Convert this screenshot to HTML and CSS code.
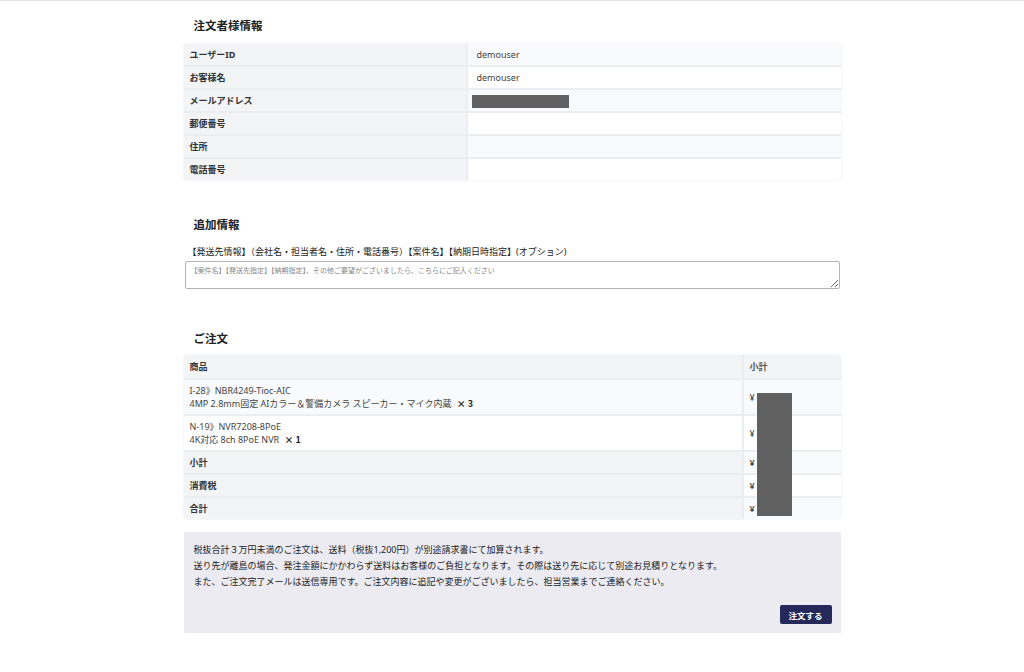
FILE: index.html
```html
<!DOCTYPE html>
<html lang="ja">
<head>
    <meta charset="UTF-8">
    <meta name="viewport" content="width=device-width, initial-scale=1.0">
    <title>ご注文確認</title>
    <link rel="stylesheet" href="styles.css">
</head>
<body>
    <div class="page">
        <h2 class="section-title">注文者様情報</h2>
        <div class="card">
            <table class="info-table">
                <tr><th>ユーザーID</th><td>demouser</td></tr>
                <tr><th>お客様名</th><td>demouser</td></tr>
                <tr><th>メールアドレス</th><td><span class="redact-inline"></span></td></tr>
                <tr><th>郵便番号</th><td></td></tr>
                <tr><th>住所</th><td></td></tr>
                <tr><th>電話番号</th><td></td></tr>
            </table>
        </div>

        <h2 class="section-title extra-title">追加情報</h2>
        <label class="field-label" for="note">【発送先情報】（会社名・担当者名・住所・電話番号）【案件名】【納期日時指定】(オプション)</label>
        <textarea id="note" class="note-input" placeholder="【案件名】【発送先指定】【納期指定】、その他ご要望がございましたら、こちらにご記入ください"></textarea>

        <h2 class="section-title order-title">ご注文</h2>
        <div class="card order-card">
            <table class="order-table">
                <tr class="head"><th>商品</th><th class="price">小計</th></tr>
                <tr class="item">
                    <td>I-28》NBR4249-Tioc-AIC<br>4MP 2.8mm固定 AIカラー＆警備カメラ スピーカー・マイク内蔵 <b class="qty">× 3</b></td>
                    <td class="price">¥</td>
                </tr>
                <tr class="item alt">
                    <td>N-19》NVR7208-8PoE<br>4K対応 8ch 8PoE NVR <b class="qty">× 1</b></td>
                    <td class="price">¥</td>
                </tr>
                <tr class="sum"><th>小計</th><td class="price">¥</td></tr>
                <tr class="sum"><th>消費税</th><td class="price">¥</td></tr>
                <tr class="sum"><th>合計</th><td class="price">¥</td></tr>
            </table>
            <span class="redact-block"></span>
        </div>

        <div class="notice">
            <p>税抜合計３万円未満のご注文は、送料（税抜1,200円）が別途請求書にて加算されます。</p>
            <p>送り先が離島の場合、発注金額にかかわらず送料はお客様のご負担となります。その際は送り先に応じて別途お見積りとなります。</p>
            <p>また、ご注文完了メールは送信専用です。ご注文内容に追記や変更がございましたら、担当営業までご連絡ください。</p>
            <div class="actions">
                <button class="order-btn">注文する</button>
            </div>
        </div>
    </div>
</body>
</html>
```

FILE: styles.css
```css
body {
    margin: 0;
    border-top: 1px solid #e6e6e6;
    background-color: #ffffff;
    color: #333333;
    font-family: "Noto Sans", "Noto Sans CJK JP", sans-serif;
    font-size: 9px;
}

.page {
    width: 657px;
    margin: 0 auto;
    padding-top: 17px;
    padding-bottom: 40px;
}

.section-title {
    margin: 0 0 10px 10px;
    font-size: 11.5px;
    font-weight: bold;
    line-height: 16px;
    color: #222222;
}

.extra-title {
    margin-top: 37px;
    margin-bottom: 13px;
}

.order-title {
    margin-top: 42px;
    margin-bottom: 8px;
}

.card {
    border-radius: 3px;
    box-shadow: 0 0 2px rgba(0, 0, 0, 0.12);
    overflow: hidden;
}

table {
    width: 100%;
    border-collapse: collapse;
}

th,
td {
    padding: 0 6px;
    text-align: left;
    vertical-align: middle;
    border-bottom: 2px solid #ebedf0;
}

tr:last-child th,
tr:last-child td {
    border-bottom: none;
}

.info-table th {
    width: 270px;
    height: 21px;
    background-color: #f3f4f6;
    font-weight: bold;
    color: #333333;
}

.info-table td {
    height: 21px;
    padding-left: 9px;
    color: #444444;
    border-left: 2px solid #ebedf0;
}

.info-table tr:nth-child(odd) td {
    background-color: #f9fafb;
}

.redact-inline {
    display: inline-block;
    width: 97px;
    height: 13px;
    margin-left: -5px;
    vertical-align: middle;
    background-color: #606060;
}

.field-label {
    display: block;
    margin: 0 0 3px 4px;
    line-height: 12px;
    color: #222222;
}

.note-input {
    display: block;
    box-sizing: border-box;
    width: 655px;
    height: 28px;
    margin-left: 1px;
    padding: 3px 5px;
    border: 1px solid #b7b1b3;
    border-radius: 2px;
    font-family: "Noto Sans", "Noto Sans CJK JP", sans-serif;
    font-size: 7px;
}

.note-input::placeholder {
    color: #888888;
}

.order-card {
    position: relative;
}

.order-table .head th {
    height: 23px;
    background-color: #f3f4f6;
    font-weight: bold;
}

.order-table .price {
    width: 85px;
    border-left: 2px solid #ebedf0;
    color: #555555;
}

.order-table .item td {
    height: 34px;
    line-height: 13px;
    background-color: #f9fafb;
    color: #444444;
}

.order-table .item.alt td {
    background-color: #ffffff;
}

.order-table .qty {
    margin-left: 3px;
    font-family: "Noto Sans CJK JP", sans-serif;
    color: #222222;
}

.order-table .sum th {
    height: 21px;
    background-color: #f3f4f6;
    font-weight: bold;
}

.order-table .sum td {
    background-color: #f9fafb;
    font-weight: bold;
}

.order-table .sum:nth-child(5) td {
    background-color: #ffffff;
}

.redact-block {
    position: absolute;
    left: 573px;
    top: 38px;
    width: 35px;
    height: 123px;
    background-color: #606060;
}

.notice {
    margin-top: 13px;
    padding: 10px 10px 9px;
    background-color: #ecebf1;
    color: #222222;
}

.notice p {
    margin: 0;
    line-height: 16px;
}

.actions {
    display: flex;
    justify-content: flex-end;
    margin-top: 15px;
}

.order-btn {
    margin-right: -1px;
    width: 52px;
    height: 19px;
    padding: 0;
    border: none;
    border-radius: 2px;
    background-color: #25295a;
    color: #ffffff;
    font-family: "Noto Sans", "Noto Sans CJK JP", sans-serif;
    font-size: 8.5px;
    font-weight: bold;
}
```
